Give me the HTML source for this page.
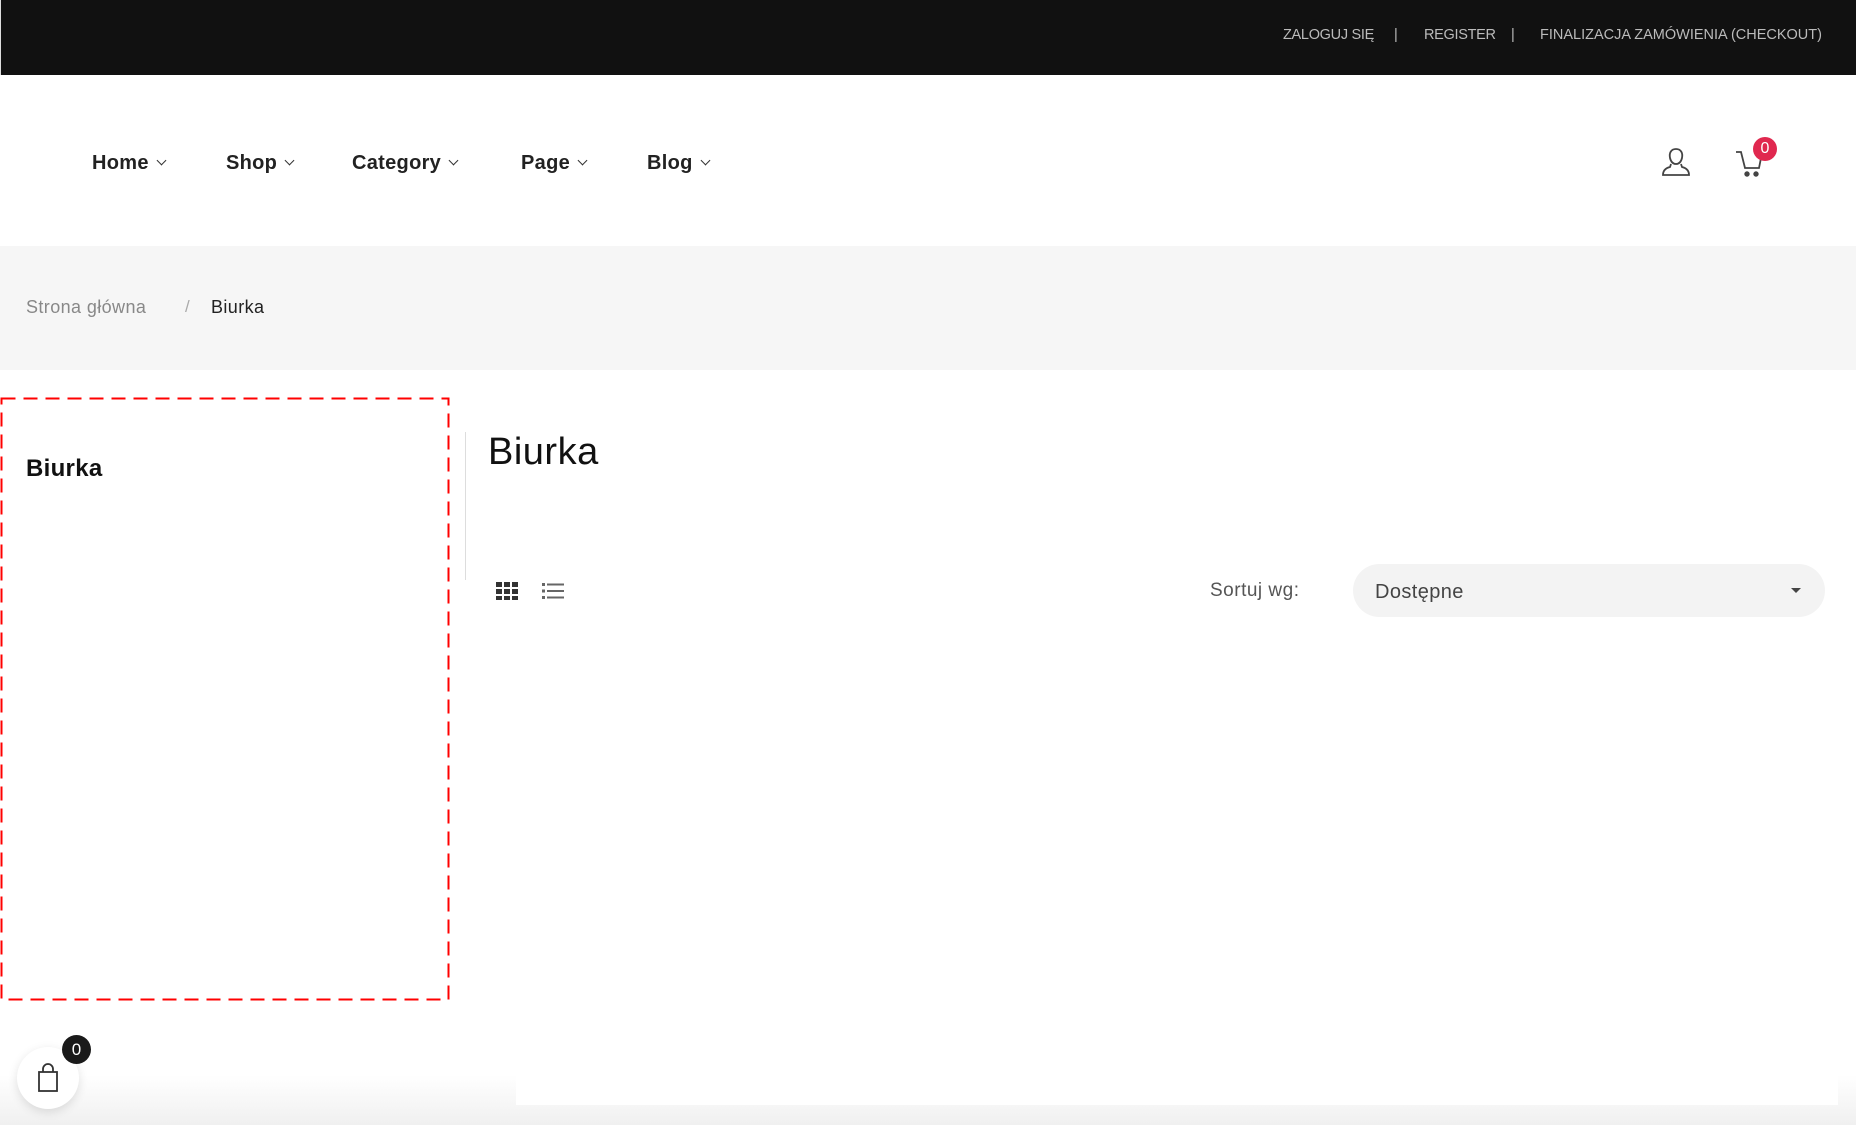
<!DOCTYPE html>
<html><head><meta charset="utf-8"><style>
*{margin:0;padding:0;box-sizing:border-box}
body{width:1856px;height:1125px;overflow:hidden;background:#fff;font-family:"Liberation Sans",sans-serif;position:relative;color:#111}
.abs{position:absolute}
.top{left:0;top:0;width:1856px;height:75px;background:#111;border-left:1px solid #ddd}
.top span{position:absolute;top:27px;font-size:14.5px;color:#bbb;letter-spacing:-0.3px}
.nav{top:152px;font-size:20px;font-weight:bold;color:#222;letter-spacing:0.3px}
.nav::after{content:"";display:inline-block;width:6px;height:6px;border-right:1.6px solid #333;border-bottom:1.6px solid #333;transform:rotate(45deg);margin-left:9px;position:relative;top:-5px}
.bc{left:0;top:246px;width:1856px;height:124px;background:#f6f6f6}
</style></head><body>
<div class="abs top">
<span style="left:1282px">ZALOGUJ SIĘ</span>
<span style="left:1393px">|</span>
<span style="left:1423px">REGISTER</span>
<span style="left:1510px">|</span>
<span style="left:1539px;letter-spacing:0">FINALIZACJA ZAMÓWIENIA (CHECKOUT)</span>
</div>
<div class="abs nav" style="left:92px">Home</div>
<div class="abs nav" style="left:226px">Shop</div>
<div class="abs nav" style="left:352px">Category</div>
<div class="abs nav" style="left:521px">Page</div>
<div class="abs nav" style="left:647px">Blog</div>
<svg class="abs" style="left:1660px;top:146px" width="32" height="32" viewBox="0 0 32 32" fill="none" stroke="#444" stroke-width="1.8"><path d="M16 3c-5 0-7 4-6 9 1 4 3 6 6 6s5-2 6-6c1-5-1-9-6-9z"/><path d="M11 18l-1 3c-4 1-7 3-7 8h26c0-5-3-7-7-8l-1-3"/></svg>
<svg class="abs" style="left:1734px;top:146px" width="30" height="32" viewBox="0 0 30 32" fill="none" stroke="#444" stroke-width="1.8"><path d="M2 6h5l4 16h14l2-10"/><circle cx="13" cy="28" r="1.8" fill="#444"/><circle cx="22" cy="28" r="1.8" fill="#444"/></svg>
<div class="abs" style="left:1753px;top:137px;width:24px;height:24px;border-radius:50%;background:#e0284f;color:#fff;font-size:16px;text-align:center;line-height:24px">0</div>
<div class="abs bc"></div>
<div class="abs" style="left:26px;top:297px;font-size:18px;color:#888;letter-spacing:0.4px">Strona główna</div>
<div class="abs" style="left:185px;top:297px;font-size:17px;color:#aaa">/</div>
<div class="abs" style="left:211px;top:297px;font-size:18px;color:#222;letter-spacing:0.4px">Biurka</div>
<svg class="abs" style="left:0;top:397px" width="451" height="605"><rect x="1.5" y="1.5" width="447" height="601" fill="none" stroke="#f00" stroke-width="2" stroke-dasharray="14 8"/></svg>
<div class="abs" style="left:26px;top:455px;font-size:24px;font-weight:bold;letter-spacing:0.3px">Biurka</div>
<div class="abs" style="left:465px;top:432px;width:1px;height:148px;background:#ddd"></div>
<div class="abs" style="left:488px;top:431px;font-size:38px;color:#111;letter-spacing:0.5px">Biurka</div>
<svg class="abs" style="left:496px;top:582px" width="22" height="18" viewBox="0 0 22 18" fill="#333"><rect x="0" y="0" width="6" height="5"/><rect x="8" y="0" width="6" height="5"/><rect x="16" y="0" width="6" height="5"/><rect x="0" y="7" width="6" height="5"/><rect x="8" y="7" width="6" height="5"/><rect x="16" y="7" width="6" height="5"/><rect x="0" y="14" width="6" height="4"/><rect x="8" y="14" width="6" height="4"/><rect x="16" y="14" width="6" height="4"/></svg>
<svg class="abs" style="left:542px;top:583px" width="22" height="16" viewBox="0 0 22 16" fill="#666"><rect x="0" y="0" width="3" height="3"/><rect x="5" y="0.5" width="17" height="2"/><rect x="0" y="6.5" width="3" height="3"/><rect x="5" y="7" width="17" height="2"/><rect x="0" y="13" width="3" height="3"/><rect x="5" y="13.5" width="17" height="2"/></svg>
<div class="abs" style="left:1210px;top:580px;font-size:19px;color:#555;letter-spacing:0.5px">Sortuj wg:</div>
<div class="abs" style="left:1353px;top:564px;width:472px;height:53px;border-radius:27px;background:#f3f3f3"></div>
<div class="abs" style="left:1375px;top:581px;font-size:20px;color:#444;letter-spacing:0.4px">Dostępne</div>
<div class="abs" style="left:1791px;top:588px;width:0;height:0;border-left:5px solid transparent;border-right:5px solid transparent;border-top:5px solid #444"></div>
<div class="abs" style="left:0;top:1075px;width:1856px;height:50px;background:linear-gradient(#fff,#f0f0f0)"></div>
<div class="abs" style="left:516px;top:1075px;width:1322px;height:30px;background:#fff"></div>
<div class="abs" style="left:17px;top:1047px;width:62px;height:62px;border-radius:50%;background:#fff;box-shadow:0 3px 10px rgba(0,0,0,.12)"></div>
<svg class="abs" style="left:37px;top:1063px" width="22" height="30" viewBox="0 0 22 30" fill="none" stroke="#333" stroke-width="1.8"><rect x="2" y="9" width="18" height="19"/><path d="M6 9V6a5 5 0 0 1 10 0v3"/></svg>
<div class="abs" style="left:62px;top:1035px;width:29px;height:29px;border-radius:50%;background:#1a1a1a;color:#fff;font-size:17px;text-align:center;line-height:29px">0</div>
</body></html>
